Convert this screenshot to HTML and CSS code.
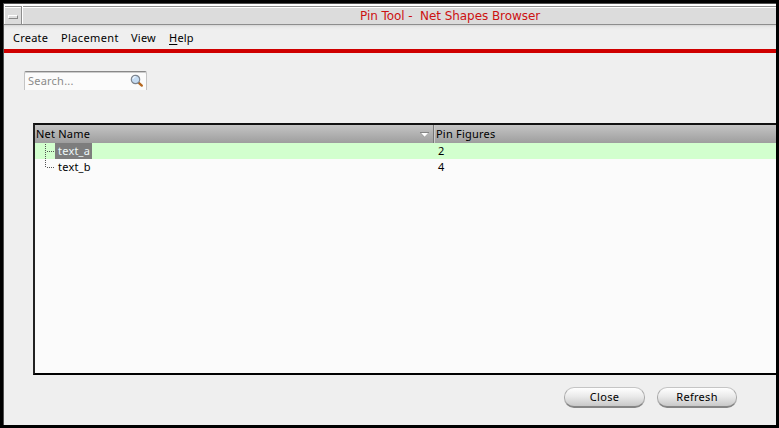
FILE: index.html
```html
<!DOCTYPE html>
<html lang="en">
<head>
<meta charset="utf-8">
<title>Pin Tool - Net Shapes Browser</title>
<link rel="stylesheet" href="styles.css">
</head>
<body>
<div class="window">
  <header class="titlebar">
    <div class="sysmenu"><span class="dash"></span></div>
    <div class="title">Pin Tool -&nbsp; Net Shapes Browser</div>
  </header>
  <nav class="menubar">
    <span class="m-create">Create</span><span class="m-place">Placement</span><span class="m-view">View</span><span class="m-help"><u>H</u>elp</span>
  </nav>
  <main class="content">
    <div class="search">
      <span>Search...</span>
      <svg width="14" height="14" viewBox="0 0 14 14">
        <path d="M8.800 8.800L11.800 11.600" stroke="#b5681f" stroke-width="2.300" stroke-linecap="round"/>
        <circle cx="5.500" cy="5.500" r="4.200" fill="#c5dcf3" stroke="#7d858f" stroke-width="1.200"/>
        <path d="M3 5a2.600 2.600 0 0 1 2.600-2.400" fill="none" stroke="#eef6ff" stroke-width="1.200"/>
      </svg>
    </div>
    <section class="table">
      <div class="row head">
        <div class="name"><span class="net">Net Name</span>
          <svg class="sort" width="9" height="6" viewBox="0 0 9 6"><path d="M1 1H8L4.500 4.800Z" fill="#fff"/><path d="M0 .5H9" stroke="#858585"/><path d="M.5 1L4.500 5.300" stroke="#999" stroke-width=".7"/></svg>
        </div>
        <div class="figures">Pin Figures</div>
      </div>
      <div class="row active">
        <div class="name"><svg class="branch" width="20" height="16"><path d="M10.500 1V16M12 8.500H20" stroke="#555" stroke-dasharray="1 1"/></svg><span class="label">text_a</span></div>
        <div class="figures num">2</div>
      </div>
      <div class="row">
        <div class="name"><svg class="branch" width="20" height="16"><path d="M10.500 1V9M12 8.500H20" stroke="#555" stroke-dasharray="1 1"/></svg><span class="label">text_b</span></div>
        <div class="figures num">4</div>
      </div>
    </section>
    <footer class="actions">
      <button class="close">Close</button>
      <button class="refresh">Refresh</button>
    </footer>
  </main>
</div>
</body>
</html>
```
FILE: styles.css
```css
* { box-sizing: border-box; }
body { margin: 0; background: #000; }
.window {
  width: 779px; height: 428px;
  border: 3px solid #000;
  box-shadow: inset 1px 1px 0 #505050;
  padding: 1px 0 0 1px;
  display: flex; flex-direction: column;
  font: 11px/16px "Noto Sans", "Open Sans", sans-serif;
  letter-spacing: .22px;
  color: #000;
}
.titlebar {
  height: 21px; flex: none; display: flex;
  border-top: 2px solid #fff;
  border-bottom: 1px solid #8d8d8d;
  background: linear-gradient(#8e8e8e 0 1px, #fff 1px 2px, #dcdcdc 2px);
}
.sysmenu {
  width: 19px; padding: 9px 0 0 4px;
  border-right: 1px solid #fff;
  box-shadow: inset -1px 0 #8d8d8d, inset 1px 0 #fff;
}
.dash { display: block; width: 10px; height: 4px; border: 1px solid #fff; border-right-color: #888; border-bottom-color: #888; background: #ddd; }
.title {
  margin-left: 337px; padding-top: 2px;
  font: 12px/16px "DejaVu Sans", sans-serif;
  letter-spacing: -.06px;
  color: #cc1111; white-space: nowrap;
}
.menubar {
  height: 28px; flex: none; display: flex;
  padding: 5px 0 0 9px;
  border-bottom: 4px solid #cf0000;
  background: linear-gradient(#d6d6d6 0, #e9e9e9 2px, #efefef 5px);
}
.m-place { letter-spacing: .38px; }
.m-create { width: 48px; }
.m-place { width: 70px; }
.m-view { width: 38px; }
.m-help u { text-underline-offset: 2px; }
.content { flex: 1; min-height: 0; background: #efefef; padding: 18px 0 0 20px; }
.search {
  width: 123px; height: 19px;
  border: 1px solid #c4c4c4; border-top: 1px solid #888; border-bottom: 0;
  border-radius: 2px 2px 0 0;
  box-shadow: inset 0 1px #ccc;
  background: #fbfbfb; color: #8a8a8a;
  display: flex; justify-content: space-between;
  padding: 1px 2px 0 3px;
}
.search svg { margin-top: 1px; }
.table {
  height: 252px; margin: 33px 0 0 9px;
  border: 2px solid #000; border-right: 0;
  border-top-color: #111; border-left-color: #222;
  background: #fbfbfb;
}
.row { display: flex; height: 16px; }
.name { width: 399px; display: flex; flex: none; }
.head { height: 18px; line-height: 18px; background: linear-gradient(#c4c4c4, #9e9e9e); }
.head .name { padding-left: 1px; border-right: 1px solid #777; justify-content: space-between; }
.head .figures { border-left: 1px solid #ccc; padding-left: 1px; }
.sort { margin: 7px 4px 0 0; }
.figures { flex: 1; padding-left: 4px; }
.active { background: #d2ffce; }
.label { padding: 0 2px 0 3px; }
.active .label { background: #7d7d7d; color: #eef8f8; }
.actions { display: flex; gap: 12px; margin: 12px 0 0 540px; }
button {
  height: 21px; padding: 0 0 1px; border: 1px solid #aaa;
  border-top-color: #c5c5c5; border-bottom: 2px solid #858585; border-radius: 10px;
  background: linear-gradient(#fff, #e8e8e8 50%, #c8c8c8);
  font: inherit; letter-spacing: .3px; color: #000;
}
.close { width: 81px; }
.refresh { width: 80px; }
```
